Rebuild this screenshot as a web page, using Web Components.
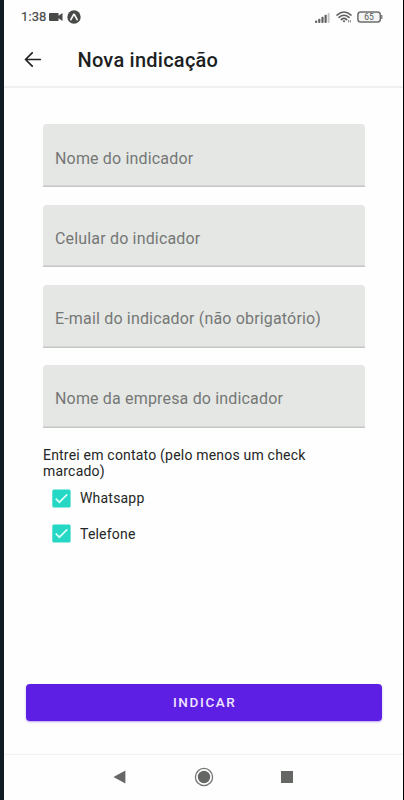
<!DOCTYPE html>
<html lang="pt-BR">
<head>
<meta charset="utf-8">
<title>Nova indicação</title>
<style>
html, body { margin: 0; height: 100%; }
body { font-family: Roboto, "Noto Sans", sans-serif; background: #fdfefd; overflow: hidden; }
</style>
</head>
<body>
<referral-screen></referral-screen>
<script>
const define = (name, markup) => {
  const template = document.createElement('template');
  template.innerHTML = markup;
  customElements.define(name, class extends HTMLElement {
    constructor() {
      super();
      this.attachShadow({ mode: 'open' }).append(template.content.cloneNode(true));
    }
  });
};

define('status-bar', `
<style>
:host { display: flex; align-items: center; height: 34px; padding: 0 20px 0 17px; box-sizing: border-box; color: #484a48; }
.time { font-size: 13px; font-weight: 400; line-height: 16px; letter-spacing: .1px; width: 28px; white-space: nowrap; -webkit-text-stroke: .2px #484a48; }
svg { display: block; flex: none; }
.app { margin-left: 4px; }
.signal { margin-left: auto; }
.wifi { margin-left: 6px; }
.battery { margin-left: 5px; }
</style>
<span class="time">1:38</span>
<svg class="cam" width="14" height="10" viewBox="0 0 14 10"><path fill="#484a48" d="M1 1h8.500v2.700L13.500 1v8L9.500 6.300V9H1q-1 0-1-1V2q0-1 1-1z"/></svg>
<svg class="app" width="14" height="14" viewBox="0 0 14 14"><circle cx="7" cy="7" r="6.700" fill="#484a48"/><path d="M3.900 9.700 6.700 4.300h.6l2.800 5.400" fill="none" stroke="#f5f6f5" stroke-width="1.700" stroke-linecap="round" stroke-linejoin="round"/></svg>
<svg class="signal" width="15" height="11" viewBox="0 0 15 11"><g fill="#626462"><rect x="0" y="8.500" width="2.200" height="2.500" rx=".8"/><rect x="3.200" y="6.800" width="2.200" height="4.200" rx=".8"/><rect x="6.400" y="4.700" width="2.200" height="6.300" rx=".8"/><rect x="9.500" y="2.800" width="2.200" height="8.200" rx=".8"/></g><rect x="12.600" y="1" width="2" height="10" rx=".8" fill="#c3c5c3"/></svg>
<svg class="wifi" width="16" height="12" viewBox="0 0 16 12"><g fill="none" stroke="#5c5e5c" stroke-width="1.500" stroke-linecap="round"><path d="M1 4.100Q8-2 15 4.100M3 6.400Q8 2 13 6.400M5.200 8.600Q8 6.200 10.800 8.600"/></g><path d="M6.400 9.700Q8 8.700 9.600 9.700L8 11.400z" fill="#5c5e5c"/><path d="M12.600 9v2.500M14.300 9v2.500" stroke="#8a8c8a"/></svg>
<svg class="battery" width="26" height="12" viewBox="0 0 26 12"><rect x=".9" y=".9" width="22.400" height="10.200" rx="2.800" fill="#f3f4f3" stroke="#6c6e6c" stroke-width="1.500"/><path d="M24.200 4h1.200v4h-1.200z" fill="#6c6e6c"/><text x="12.100" y="9" text-anchor="middle" font-family="Roboto, sans-serif" font-size="8.500" fill="#555755">65</text></svg>
`);

define('app-bar', `
<style>
:host { display: flex; align-items: center; height: 52px; padding-left: 20px; color: #1c1e1f; border-bottom: 2px solid #eff0ef; box-sizing: content-box; }
h1 { margin: 0 0 0 35.500px; font-size: 20px; line-height: 26px; font-weight: 500; letter-spacing: .24px; white-space: nowrap; }
svg { display: block; }
</style>
<svg width="18" height="16" viewBox="0 0 18 16"><path d="M16.300 7.500H1.800M8.200 .8 1.500 7.500l6.700 6.700" fill="none" stroke="#222423" stroke-width="1.700" stroke-linecap="round" stroke-linejoin="round"/></svg>
<h1><slot></slot></h1>
`);

define('filled-field', `
<style>
:host { display: flex; align-items: center; height: 62.700px; padding: 6px 12px 0; box-sizing: border-box; border-radius: 4px 4px 0 0; background: #e5e7e5; box-shadow: inset 0 -1.500px #c5c7c5; color: #757775; font-size: 16px; line-height: 20px; letter-spacing: .17px; white-space: nowrap; }
</style>
<slot></slot>
`);

define('check-option', `
<style>
:host { display: flex; align-items: center; gap: 9px; height: 19px; font-size: 14px; line-height: 18px; letter-spacing: .2px; color: #242625; }
svg { display: block; }
</style>
<svg width="19" height="19" viewBox="0 0 19 19"><rect x=".3" y=".4" width="18.300" height="18.200" rx="1.600" fill="#24d8c5"/><path d="M3.700 9.600 7.400 13.200 15.300 5.400" fill="none" stroke="#d8fff8" stroke-width="1.700"/></svg>
<span><slot></slot></span>
`);

define('primary-button', `
<style>
:host { display: block; }
button { display: block; width: 100%; height: 37px; padding: 0 0 0 1px; border: 0; border-radius: 4px; background: #5e1fe5; color: #efe5ff; font: 500 13.500px/37px Roboto, sans-serif; letter-spacing: 1.600px; box-shadow: 0 1px 2px #7a49ea80; }
</style>
<button type="button"><slot></slot></button>
`);

define('nav-bar', `
<style>
:host { display: grid; grid-template-columns: 1fr 20px 1fr; align-items: center; height: 46px; padding-bottom: 1px; border-top: 1px solid #f1f2f1; box-sizing: border-box; }
svg { display: block; }
.back { justify-self: end; margin-right: 68px; }
.recent { margin-left: 67px; }
</style>
<svg class="back" width="13" height="14" viewBox="0 0 13 14"><path d="M.5 7 12.400.5v13z" fill="#656765"/></svg>
<svg width="20" height="20" viewBox="0 0 20 20"><circle cx="10" cy="10" r="8.600" fill="none" stroke="#747674" stroke-width="1.300"/><circle cx="10" cy="10" r="6.200" fill="#656765"/></svg>
<svg class="recent" width="12" height="12" viewBox="0 0 12 12"><path d="M0 0h12v12H0z" fill="#656765"/></svg>
`);

define('referral-screen', `
<style>
:host { display: flex; flex-direction: column; height: 800px; box-sizing: border-box; border-left: 4px solid #111b24; border-right: 1px solid #000; background: #fdfefd; }
.form { flex: 1; padding: 36.300px 38px 0 39px; }
.fields { display: grid; gap: 17.600px; }
p { margin: 19.400px 0 0; font-size: 14px; line-height: 16px; letter-spacing: .2px; color: #242625; width: 290px; }
.checks { display: grid; gap: 16.500px; padding: 9.700px 0 0 9px; }
primary-button { margin: 0 21px 33px 22.400px; }
</style>
<status-bar></status-bar>
<app-bar>Nova indicação</app-bar>
<div class="form">
  <div class="fields">
    <filled-field>Nome do indicador</filled-field>
    <filled-field>Celular do indicador</filled-field>
    <filled-field>E-mail do indicador (não obrigatório)</filled-field>
    <filled-field>Nome da empresa do indicador</filled-field>
  </div>
  <p>Entrei em contato (pelo menos um check marcado)</p>
  <div class="checks">
    <check-option>Whatsapp</check-option>
    <check-option>Telefone</check-option>
  </div>
</div>
<primary-button>INDICAR</primary-button>
<nav-bar></nav-bar>
`);
</script>
</body>
</html>
